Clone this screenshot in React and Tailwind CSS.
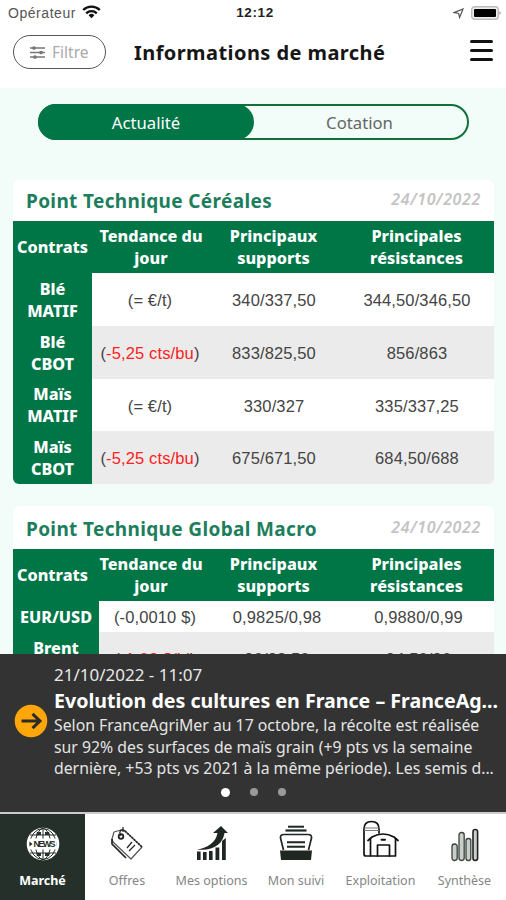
import React, { useState } from 'react';

const cereales = [
  { contrat: ['Blé', 'MATIF'], tendance: '= €/t', supports: '340/337,50', resistances: '344,50/346,50' },
  { contrat: ['Blé', 'CBOT'], tendance: '-5,25 cts/bu', baisse: true, supports: '833/825,50', resistances: '856/863' },
  { contrat: ['Maïs', 'MATIF'], tendance: '= €/t', supports: '330/327', resistances: '335/337,25' },
  { contrat: ['Maïs', 'CBOT'], tendance: '-5,25 cts/bu', baisse: true, supports: '675/671,50', resistances: '684,50/688' },
];

const macro = [
  { contrat: ['EUR/USD'], tendance: '-0,0010 $', supports: '0,9825/0,98', resistances: '0,9880/0,99' },
  { contrat: ['Brent', ''], tendance: '-1,03 $/bl', baisse: true, supports: '90/88,50', resistances: '94,50/96' },
];

function StatusBar() {
  return (
    <div className="grid h-[27px] grid-cols-3 items-center pl-2 pr-[5px] text-[13px] text-[#222] font-['Liberation_Sans',sans-serif]">
      <div className="flex items-center gap-[6px]">
        <span className="text-[14px] tracking-[0.55px] text-[#555]">Opérateur</span>
        <svg className="-mt-[3px]" width="19" height="14" viewBox="0 0 19 14" fill="none" stroke="#111" strokeWidth="2.4">
          <path d="M1.2 5 A12 12 0 0 1 17.8 5" />
          <path d="M4.2 8.3 A7.6 7.6 0 0 1 14.8 8.3" />
          <path d="M9.5 13.2 L6.6 10.2 A4.2 4.2 0 0 1 12.4 10.2 Z" fill="#111" stroke="none" />
        </svg>
      </div>
      <span className="pl-px text-center text-[13.5px] font-bold tracking-[0.6px]">12:12</span>
      <div className="flex items-center justify-end gap-[7px]">
        <svg width="11" height="11" viewBox="0 0 11 11" fill="none" stroke="#555" strokeWidth="1.2">
          <path d="M10 1 L6.6 9.5 L5.6 5.4 L1 4.6 Z" />
        </svg>
        <svg className="-mt-px" width="30" height="14" viewBox="0 0 30 14">
          <rect x="0.7" y="0.7" width="26.6" height="12.6" rx="3" fill="#eee" stroke="#bbb" strokeWidth="1.4" />
          <rect x="3" y="3" width="22" height="8" rx="1" fill="#000" />
          <path d="M28.4 5 L30 7 L28.4 9 Z" fill="#999" />
        </svg>
      </div>
    </div>
  );
}

function Header() {
  return (
    <header className="flex h-[61px] items-start pl-[13px] pr-[13px] pt-2">
      <button className="flex h-[34px] w-[93px] items-center gap-[7px] rounded-full border border-[#555] pl-[16px] pt-px text-[15.5px] text-[#aaa]">
        <svg width="15" height="15" viewBox="0 0 15 15" stroke="#777" strokeWidth="1.3" fill="#777">
          <path d="M0 3 H15 M0 7.5 H15 M0 12 H15" />
          <circle cx="4" cy="3" r="1.2" />
          <circle cx="11" cy="7.5" r="1.2" />
          <circle cx="5" cy="12" r="1.2" />
        </svg>
        <span>Filtre</span>
      </button>
      <h1 className="ml-[28px] whitespace-nowrap text-[20px] font-bold leading-[36px] tracking-[0.43px] text-[#161616]">
        Informations de marché
      </h1>
      <button className="ml-auto mt-[5px] flex flex-col gap-[6px]">
        <span className="h-[3px] w-[23px] rounded-full bg-[#111]" />
        <span className="h-[3px] w-[23px] rounded-full bg-[#111]" />
        <span className="h-[3px] w-[23px] rounded-full bg-[#111]" />
      </button>
    </header>
  );
}

function Onglets() {
  const [onglet, setOnglet] = useState('actualite');
  const actif = 'h-9 -mx-[2px] -my-[2px] w-[216px] rounded-full bg-[#007647] pt-px text-white';
  const inactif = 'flex-1 pt-px text-[#666]';

  return (
    <div className="flex h-9 w-[431px] rounded-full border-2 border-[#12703a] text-[16.7px]">
      <button onClick={() => setOnglet('actualite')} className={onglet === 'actualite' ? actif : inactif}>
        Actualité
      </button>
      <button onClick={() => setOnglet('cotation')} className={onglet === 'cotation' ? actif : inactif}>
        Cotation
      </button>
    </div>
  );
}

function Tableau({ titre, date, lignes, large }) {
  const colonnes = large ? 'grid-cols-[86px_112px_132px_151px]' : 'grid-cols-[79px_116px_132px_154px]';
  const valeur = "flex items-center justify-center pt-[2px] text-[16.5px] tracking-[0.13px] text-[#444] font-['Liberation_Sans',sans-serif]";

  return (
    <section className="w-[481px] overflow-hidden rounded-[6px] bg-white">
      <div className={`flex justify-between pl-[13px] pr-[13px] ${large ? 'h-[43px]' : 'h-[41px]'}`}>
        <h2 className={`text-[19px] font-bold tracking-[0.35px] text-[#1c7e5c] ${large ? 'leading-[46px]' : 'leading-[42px]'}`}>{titre}</h2>
        <span className={`text-[16px] font-semibold italic tracking-[0.65px] text-[#c4c4c4] ${large ? 'leading-[42px]' : 'leading-[38px]'}`}>{date}</span>
      </div>
      <div className="grid h-[52px] grid-cols-[79px_118px_127px_159px] items-center bg-[#007647] text-center text-[16.2px] font-extrabold leading-[22px] text-white">
        <span>Contrats</span>
        <span>Tendance du<br />jour</span>
        <span>Principaux<br />supports</span>
        <span>Principales<br />résistances</span>
      </div>
      {lignes.map((ligne, i) => (
        <div
          key={i}
          className={`grid ${colonnes} ${ligne.contrat.length > 1 ? 'h-[52.75px]' : 'h-[31px]'} ${i % 2 ? 'bg-[#ebebeb]' : 'bg-white'}`}
        >
          <div className="flex flex-col justify-center bg-[#007647] pt-px text-center text-[16.2px] font-extrabold leading-[22px] text-white">
            {ligne.contrat.map((mot) => <span key={mot} className="h-[22px]">{mot}</span>)}
          </div>
          <div className={valeur}>
            (<span className={ligne.baisse ? 'text-[#fa2222]' : ''}>{ligne.tendance}</span>)
          </div>
          <div className={valeur}>{ligne.supports}</div>
          <div className={valeur}>{ligne.resistances}</div>
        </div>
      ))}
    </section>
  );
}

function Actualite() {
  return (
    <div className="flex h-[158px] flex-col bg-[#333] text-white">
      <div className="flex h-[127px] pl-[14px] pt-[10px]">
        <svg className="mt-[40px] shrink-0" width="34" height="34" viewBox="0 0 34 34">
          <circle cx="17" cy="17" r="16.3" fill="#ffa70a" />
          <path d="M7.5 17 H26 M18.5 9.8 L26 17 L18.5 24.2" fill="none" stroke="#2b2b2b" strokeWidth="3" />
        </svg>
        <div className="ml-[6px] whitespace-nowrap">
          <p className="text-[17px] leading-[21px] text-[#e8e8e8]">21/10/2022 - 11:07</p>
          <p className="mt-[2px] text-[19.6px] font-bold leading-[27px]">Evolution des cultures en France – FranceAg...</p>
          <p className="mt-px text-[15.8px] leading-[21.5px] text-[#e4e4e4]">
            Selon FranceAgriMer au 17 octobre, la récolte est réalisée<br />
            sur 92% des surfaces de maïs grain (+9 pts vs la semaine<br />
            dernière, +53 pts vs 2021 à la même période). Les semis d...
          </p>
        </div>
      </div>
      <div className="flex h-[22px] items-center justify-center gap-5">
        <span className="size-[9px] rounded-full bg-white" />
        <span className="size-2 rounded-full bg-[#999]" />
        <span className="size-2 rounded-full bg-[#999]" />
      </div>
    </div>
  );
}

function IconeMarche() {
  return (
    <svg className="mt-[2px]" width="34" height="34" viewBox="0 0 34 34">
      <circle cx="17" cy="17" r="16.3" fill="#fff" />
      <g fill="none" stroke="#25302a" strokeWidth="1">
        <ellipse cx="17" cy="17" rx="7.5" ry="15.5" />
        <ellipse cx="17" cy="17" rx="13" ry="15.5" />
        <path d="M17 1 V33 M4 8 H30 M4 26 H30" />
      </g>
      <g fill="#25302a">
        <path d="M11 5 h4 v3 h-5z M19 5 h4 l1 3 h-5z M10 26 h5 v3 h-4z M19 26 h5 l-1 3 h-4z" />
      </g>
      <rect x="3.5" y="11.5" width="27" height="11" fill="#fff" />
      <path d="M3.5 14.5 l3 2.5 -3 2.5z" fill="#25302a" />
      <text x="7.5" y="20.3" fontSize="9" textLength="22" lengthAdjust="spacing" fill="#25302a" fontFamily="Liberation Sans, sans-serif">NEWS</text>
    </svg>
  );
}

function IconeOffres() {
  return (
    <svg className="mt-[2px]" width="34" height="34" viewBox="0 0 34 34" fill="none" stroke="#222" strokeWidth="1.2" strokeLinejoin="round">
      <path d="M2 12 L4 5 L11 3 L15 4 L32 20 L21 32 L3 15 Z" stroke="#555" />
      <path d="M15 4 L32 20" strokeWidth="1.6" strokeDasharray="2 1" />
      <path d="M2 12 L2 17 L16 31" strokeWidth="1.7" />
      <circle cx="11" cy="9.5" r="2.3" strokeWidth="1.8" />
      <path d="M11 9 C8 4 12 1 15 4 M13 0 V5" />
      <path d="M17 21 L22 15 M19 24 L25 18" />
    </svg>
  );
}

function IconeOptions() {
  return (
    <svg width="32" height="36" viewBox="0 0 32 36" fill="#1e2722">
      <path d="M1 24.5 C12 23 20 17 21.5 8 L17 8 L25 1 L32 8 L28.5 8 C27 19 17 26.5 1 24.5 Z" />
      <path d="M1 26.5 h3.6 V35 h-3.6z M7 27 h3.6 V35 h-3.6z M13 26 h3.6 V35 h-3.6z M19.5 22.5 h3.8 V35 h-3.8z M26 16 l3.8 -3 V35 h-3.8z" />
    </svg>
  );
}

function IconeSuivi() {
  return (
    <svg width="34" height="36" viewBox="0 0 34 36" fill="none" stroke="#1e2722">
      <path d="M9 1.7 H25" strokeWidth="2" />
      <path d="M6.5 5.5 H27.5" strokeWidth="2.2" />
      <path d="M4.5 25 L1.5 13 Q1 9.5 5 9.5 H29 Q33 9.5 32.5 13 L29.5 25" strokeWidth="1.7" />
      <path d="M8 17.2 H26 M8 21.8 H26" strokeWidth="2" />
      <path d="M1 25.5 H33 L32 35 H2 Z" fill="#1e2722" stroke="none" />
    </svg>
  );
}

function IconeExploitation() {
  return (
    <svg className="-mt-[8px]" width="36" height="38" viewBox="0 0 36 38" fill="none" stroke="#111" strokeWidth="1.7" strokeLinecap="round" strokeLinejoin="round">
      <path d="M7 36 H3 Q1 36 1 34 V9 Q1 1.5 8.5 1.5 Q16 1.5 16 9 V13" />
      <path d="M1.5 8 H16 M1.5 10.5 H16" stroke="#777" strokeWidth="1.2" />
      <path d="M5 20.5 L9 17 Q20 11 31 17 L35 20.5" />
      <path d="M7.5 19 V36 H32.5 V19" />
      <path d="M14.5 36 V25 H26.5 V36" />
      <path d="M18.5 19.8 H22" strokeWidth="2" />
    </svg>
  );
}

function IconeSynthese() {
  return (
    <svg className="mt-[3px]" width="28" height="34" viewBox="0 0 28 34" fill="#c9cecb" stroke="#3a423d" strokeWidth="1.3">
      <rect x="1" y="16" width="5.2" height="16.5" rx="2.4" />
      <rect x="8" y="4.5" width="5.2" height="28" rx="2.4" />
      <rect x="15" y="10.5" width="4.8" height="22" rx="2.2" />
      <rect x="22" y="1.5" width="4.6" height="31" rx="2.2" stroke="#222" strokeWidth="1.6" />
    </svg>
  );
}

const menu = [
  { nom: 'Marché', Icone: IconeMarche, actif: true },
  { nom: 'Offres', Icone: IconeOffres },
  { nom: 'Mes options', Icone: IconeOptions },
  { nom: 'Mon suivi', Icone: IconeSuivi },
  { nom: 'Exploitation', Icone: IconeExploitation },
  { nom: 'Synthèse', Icone: IconeSynthese },
];

export default function App() {
  return (
    <div className="flex h-[900px] w-[506px] flex-col overflow-hidden bg-white font-['Noto_Sans',sans-serif]">
      <StatusBar />
      <Header />
      <main className="flex h-[566px] flex-col overflow-hidden bg-[#f2fcf8] pl-[13px] pt-4">
        <div className="pl-[25px]"><Onglets /></div>
        <div className="mt-10 flex flex-col gap-[22px]">
          <Tableau titre="Point Technique Céréales" date="24/10/2022" lignes={cereales} />
          <Tableau titre="Point Technique Global Macro" date="24/10/2022" lignes={macro} large />
        </div>
      </main>
      <Actualite />
      <nav className="grid h-[88px] grid-cols-[85px_84px_85px_84px_85px_83px] border-t-2 border-[#ccc]">
        {menu.map(({ nom, Icone, actif }) => (
          <a
            key={nom}
            className={`flex flex-col items-center whitespace-nowrap text-[12.5px] ${actif ? 'bg-[#25302a] font-bold text-white' : 'text-[#858585]'}`}
          >
            <span className="flex h-[58px] items-center"><Icone /></span>
            <span className="leading-[17px]">{nom}</span>
          </a>
        ))}
      </nav>
    </div>
  );
}
